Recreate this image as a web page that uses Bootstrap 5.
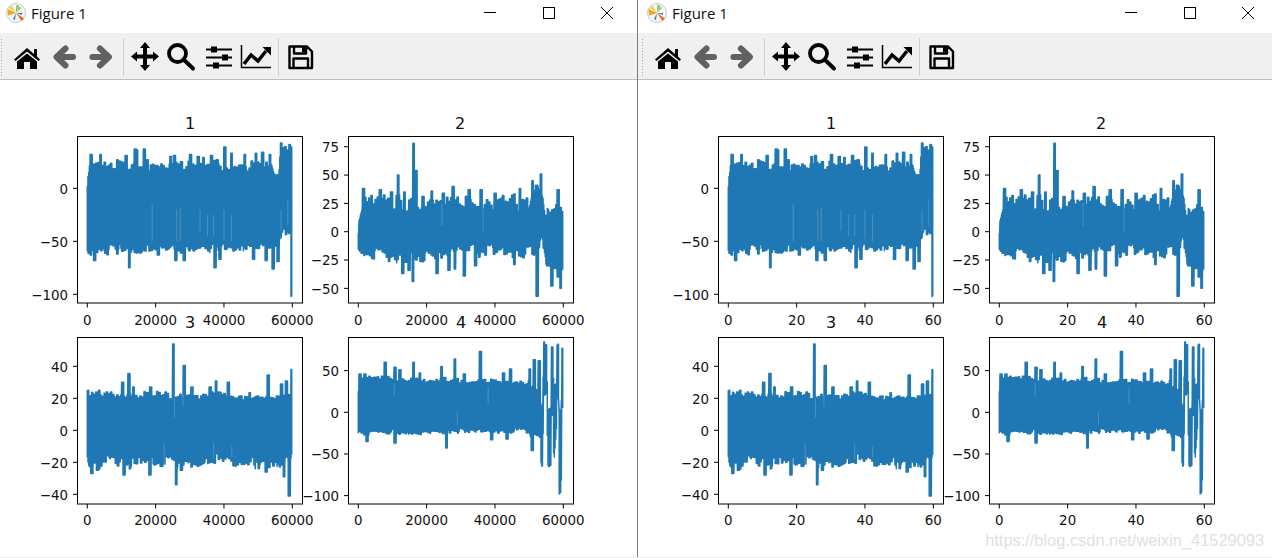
<!DOCTYPE html>
<html lang="en">
<head>
<meta charset="UTF-8">
<title>Figure 1</title>
<link href="https://cdn.jsdelivr.net/npm/bootstrap@5.3.0/dist/css/bootstrap.min.css" rel="stylesheet">
<style>
    html, body { height: 558px; overflow: hidden; background: #fff; }
    .desk { width: 1272px; height: 558px; position: relative; border-bottom: 1px solid #eee; }
    .fig-win { height: 557px; flex: none; }
    .fig-left { width: 638px; border-right: 1px solid #7b7b7b; --pad-l: 0px; --pad-r: 24px; }
    .fig-right { width: 634px; --pad-l: 3px; --pad-r: 18px; }
    .win-bar { height: 33px; background: #fff; padding: 0 var(--pad-r) 7px calc(6px + var(--pad-l)); }
    .win-title { font: 15px "Open Sans", "Noto Sans", sans-serif; color: #111; margin: 0 0 0 5px; }
    .win-ctl { gap: 46.5px; }
    .win-ctl svg { display: block; }
    .tool-strip { height: 47px; background: #f0f0f0; border-bottom: 1px solid #bdbdbd; padding: 2px 0 0 var(--pad-l); }
    .tool-grip { width: 3px; height: 39px; margin: 0 6px 0 0; background-image: radial-gradient(#a9a9a9 0.8px, transparent 1px); background-size: 3px 3px; }
    .tool-btn { width: 36px; height: 32px; display: block; flex: none; }
    .tool-sep { width: 1px; height: 38px; background: #cfcfcf; flex: none; margin: 0 3px 0 6px; }
    .tool-sep-wide { margin-left: 7px; }
    .fig-canvas { display: block; margin-left: var(--pad-l); }
    .fig-canvas text { font-family: "DejaVu Sans", sans-serif; font-size: 13.4px; fill: #111; }
    .fig-canvas text.ax-title { font-size: 16px; }
    .wm-text { position: absolute; right: 8px; bottom: 7px; font: 16.4px "Liberation Sans", sans-serif; color: #e0e0e0; white-space: nowrap; }
</style>
</head>
<body>
<div class="desk d-flex">
    <div class="fig-win fig-left" id="winLeft">
        <div class="win-bar d-flex align-items-center">
            <svg width="20" height="20" viewBox="0 0 20 20">
                <circle cx="10" cy="10" r="9.5" fill="#f6f6f6" stroke="#c8c8c8"/>
                <path d="M10 10 1.500 6 2 12.500Z" fill="#f2a31f"/>
                <path d="M10 10 5.500 2.500 3 5Z" fill="#efd43c"/>
                <path d="M10 10 10.500 2 13 2.500Z" fill="#7ab648"/>
                <path d="M10 10 15 5 13.500 3.500Z" fill="#8fbf5a"/>
                <path d="M10 10 15.500 18 18 15.500Z" fill="#ea6a2c"/>
                <path d="M10 10 7 16 9 17Z" fill="#3a80c0"/>
                <path d="M10 10 16 10 16 12Z" fill="#3a80c0"/>
            </svg>
            <span class="win-title">Figure 1</span>
            <div class="win-ctl d-flex align-items-center ms-auto">
                <svg width="12" height="12" viewBox="0 0 12 12"><path d="M0 5.500H12" stroke="#000"/></svg>
                <svg width="12" height="12" viewBox="0 0 12 12"><rect x=".5" y=".5" width="11" height="11" fill="none" stroke="#000"/></svg>
                <svg width="12" height="12" viewBox="0 0 12 12"><path d="M0 0 12 12M12 0 0 12" stroke="#000"/></svg>
            </div>
        </div>
        <div class="tool-strip d-flex align-items-center">
            <div class="tool-grip"></div>
            <svg class="tool-btn" viewBox="0 0 36 32"><path d="M18 7 25 13V8H28V15.500L31 18.500 29.500 20 18 10.500 6.500 20 5 18.500Z"/><path d="M8 20.500 18 12.500 28 20.500V28H21V21H15V28H8Z"/></svg>
            <svg class="tool-btn" viewBox="0 0 36 32"><path d="M12 16H28M20.500 7.500 11.500 16 20.500 24.500" fill="none" stroke="#616161" stroke-width="6" stroke-linecap="round" stroke-linejoin="round"/></svg>
            <svg class="tool-btn" viewBox="0 0 36 32"><path d="M27.400 16H11.400M18.900 7.500 27.900 16 18.900 24.500" fill="none" stroke="#616161" stroke-width="6" stroke-linecap="round" stroke-linejoin="round"/></svg>
            <div class="tool-sep"></div>
            <svg class="tool-btn" viewBox="0 0 36 32"><path d="M18 1 23 7H20V13.500H26V10.500L32 15.500 26 20.500V17.500H20V24H23L18 30 13 24H16V17.500H10V20.500L4 15.500 10 10.500V13.500H16V7H13Z"/></svg>
            <svg class="tool-btn" viewBox="0 0 36 32"><circle cx="14.500" cy="12.500" r="8.500" fill="none" stroke="#000" stroke-width="3.800"/><path d="M20.500 18.500 30 27.500" stroke="#000" stroke-width="4" stroke-linecap="round"/></svg>
            <svg class="tool-btn" viewBox="0 0 36 32"><path d="M7 8.500H33M7 16.500H33M7 24.500H33" stroke="#000" stroke-width="2"/><path d="M12 5.500h6v6h-6zM23 13.500h6v6h-6zM14 21.500h6v6h-6z"/></svg>
            <svg class="tool-btn" viewBox="0 0 36 32"><path d="M6.500 4V26.500H36" fill="none" stroke="#000" stroke-width="1.500"/><path d="M9 23 16 14 23 20 31 10" fill="none" stroke="#000" stroke-width="3.500"/><path d="M27.500 6H36V14.500Z"/></svg>
            <div class="tool-sep tool-sep-wide"></div>
            <svg class="tool-btn" viewBox="0 0 36 32"><path d="M7.500 5.500H25L30 10.500V27H7.500ZM12 5.500V12.500H24V5.500M11.500 27V17.500H26V27" fill="none" stroke="#000" stroke-width="2.400" stroke-linejoin="round"/><path d="M20 6h3v5.500h-3z"/></svg>
        </div>
        <svg class="fig-canvas" width="634" height="477" viewBox="0 80 634 477"></svg>
    </div>
    <div class="wm-text">https://blog.csdn.net/weixin_41529093</div>
</div>

<script src="https://cdn.jsdelivr.net/npm/bootstrap@5.3.0/dist/js/bootstrap.bundle.min.js"></script>
<script>
    // the four traces: envelope anchors (x in thousands, y in data units) plus single peaks
    const plots = [
        {
            title: '1', box: [77.5, 136.5, 302.5, 303], zero: 87.3, y0: 188.3, sy: 1.06, ticks: [0, -50, -100], titleX: 190, titleY: 129, labY: 325,
            top: [[0, 5], [.2, 14], [.6, 22], [54, 21], [54.8, 11], [56, 11], [56.5, 40], [59.7, 41], [59.9, 40], [60, -12]], topN: 2.500, topS: 4,
            bot: [[0, -58], [54, -55], [56.6, -50], [57, -42], [60, -42]], botN: 3, botS: 2.500,
            topP: [[1.1, 32], [3.9, 32], [8.8, 27], [11.3, 31], [14, 37], [14.5, 36], [16.7, 37], [17.5, 27], [24.4, 30], [25.5, 31], [27.6, 25], [30.2, 32], [32.5, 30], [34, 29], [36.4, 31], [38, 27], [40.3, 39], [42.2, 33], [46.1, 32], [49.4, 33], [51.3, 34], [53.5, 32]],
            botP: [[2.2, -68], [1, -63], [8.8, -62], [12.3, -75], [15.5, -61], [20.8, -63], [25.9, -68], [28.4, -68], [37.4, -75], [38.8, -67], [48.6, -67], [52.3, -68], [54.4, -76], [55.9, -69], [59.95, -102]],
            pale: [[19, -15, -50], [26.2, -20, -50], [27.2, -18, -50], [33, -20, -40], [35.2, -25, -45], [37, -25, -45], [40, -20, -48], [42.2, -25, -50], [58.7, -10, -35], [56.7, -20, -40]]
        },
        {
            title: '2', box: [348.5, 136.5, 573.5, 303], zero: 358.3, y0: 231.7, sy: 1.133, ticks: [75, 50, 25, 0, -25, -50], titleX: 460, titleY: 129, labY: 325,
            top: [[0, 5], [.2, 16], [1, 25], [50, 27], [51, 38], [53.8, 38], [54.5, 20], [56, 16], [60, 20]], topN: 3, topS: 6,
            bot: [[0, -18], [.3, -21], [52, -17], [53, -20], [53.5, -5], [54, -8], [55, -25], [60, -30]], botN: 3, botS: 5,
            topP: [[1.5, 38], [3.9, 32], [6.5, 37], [9.8, 35], [11.7, 50], [13.5, 35], [16.2, 78], [16.9, 54], [19, 31], [21.5, 36], [24.9, 34], [27.8, 40], [32.5, 37], [36, 37], [40, 34], [42.4, 32], [47.3, 38], [51, 45], [52.2, 41], [53.5, 51], [58.5, 37]],
            botP: [[13, -37], [14.8, -34], [16, -44], [23, -37], [26.6, -34], [28.3, -33], [31, -39], [34.3, -30], [45.7, -29], [52.3, -57], [56.6, -48], [58.5, -40], [59.2, -50]],
            pale: [[24.5, 5, 25], [36.5, 0, 20]]
        },
        {
            title: '3', box: [77.5, 337.5, 302.5, 504], zero: 87.3, y0: 430.3, sy: 1.6, ticks: [40, 20, 0, -20, -40], titleX: 190, titleY: 328, labY: 525,
            top: [[0, 18], [.2, 22], [59.2, 21], [59.6, 15], [60, 6]], topN: 1.500, topS: 1.500,
            bot: [[0, -15], [.5, -20], [33, -20], [37, -17], [45, -19], [58, -20], [59.8, -12], [60, -10]], botN: 2.500, botS: 2.500,
            topP: [[.2, 25], [3.5, 25], [10.3, 30], [12.2, 35.500], [13.500, 27], [18.6, 27], [25.2, 54], [28.4, 40.500], [30.7, 27], [35.9, 27], [37.7, 30.800], [41.3, 30], [53, 34.500], [56.9, 29], [58.3, 30.800], [59.8, 38]],
            botP: [[1.3, -27], [3, -25], [10.8, -28], [12.5, -24], [18.3, -28], [26, -34], [27.5, -25], [52.3, -26], [57.6, -29], [59.1, -41]],
            pale: [[25.5, 8, 20], [28, 15, 22], [37, -18, -8], [22.5, -8, -22], [42.3, -10, -17]]
        },
        {
            title: '4', box: [348.5, 337.5, 573.5, 504], zero: 358.3, y0: 412.3, sy: .833, ticks: [50, 0, -50, -100], titleX: 461, titleY: 328, labY: 525,
            top: [[0, 25], [.2, 40], [49.500, 36], [50.5, 30], [53.3, 28], [53.5, 7], [54, 7], [54.2, 82], [55.2, 82], [55.4, 3], [56.4, 3], [56.5, 76], [57, 76], [57.2, 35], [58, 35], [58.1, 82], [58.6, 82], [58.7, 0], [59.4, 0], [59.5, 75], [60, 75]], topN: 2, topS: 2.500,
            bot: [[0, -25], [50, -22], [50.5, -30], [51, -25], [52, -30], [53.3, -30], [53.5, -65], [54, -65], [54.2, 20], [55.2, 20], [55.4, -65], [56.4, -65], [56.5, -5], [57, -5], [57.2, -61], [57.6, -40], [58, -20], [58.1, 15], [58.6, 15], [58.7, -100], [59.4, -100], [59.5, 5], [60, 5]], botN: 2, botS: 2.500,
            topP: [[.5, 46], [2, 46], [4.8, 42], [7.9, 60], [10.7, 54], [12.2, 51], [16.2, 60], [18, 47], [24.4, 55], [28.3, 64], [31, 46], [35.7, 73], [42.5, 47], [44.5, 52], [50.2, 52], [51.5, 63], [53, 62]],
            botP: [[2.6, -35], [10.7, -37], [25.8, -43], [39, -33], [43.5, -32], [50.9, -46]],
            pale: [[10.5, 20, 35], [38, 10, 30], [29, -15, 0]]
        }
    ];

    // simple seeded random so both windows get the same trace
    function seeded(s) {
        return () => { s = (s * 1664525 + 1013904223) >>> 0; return s / 4294967296; };
    }

    function lerp(points, x) {
        for (let i = 1; i < points.length; i++) {
            if (x <= points[i][0]) {
                const a = points[i - 1], b = points[i];
                return a[1] + (b[1] - a[1]) * (x - a[0]) / (b[0] - a[0]);
            }
        }
        return points[points.length - 1][1];
    }

    function tracePath(p, idx) {
        const rnd = seeded(idx * 97 + 11);
        const pxPerK = 205 / 60;
        let d = '', nt = 0, nb = 0, st = 0, sb = 0;
        for (let i = 0; i * .7 <= 205; i++) {
            const k = i * .7 / pxPerK;
            if (i % 3 === 0) nt = (rnd() - .5) * 2 * p.topN;
            if (i % 3 === 1) nb = (rnd() - .5) * 2 * p.botN;
            if (i % 9 === 0) st = (rnd() - .5) * 2 * p.topS;
            if (i % 8 === 0) sb = (rnd() - .5) * 2 * p.botS;
            let up = lerp(p.top, k) + nt + st, lo = lerp(p.bot, k) + nb + sb;
            p.topP.forEach(q => { if (Math.abs(q[0] - k) < .38) up = Math.max(up, q[1]); });
            p.botP.forEach(q => { if (Math.abs(q[0] - k) < .38) lo = Math.min(lo, q[1]); });
            const x = (p.zero + i * .7).toFixed(1);
            d += `${d ? 'L' : 'M'}${x} ${(p.y0 - up * p.sy).toFixed(1)}L${x} ${(p.y0 - lo * p.sy).toFixed(1)}`;
        }
        return d;
    }

    function drawFigure(svg, xLabels) {
        let out = '';
        plots.forEach((p, idx) => {
            const [x0, y0, x1, y1] = p.box;
            out += `<path d="${tracePath(p, idx)}" fill="none" stroke="#1f77b4" stroke-width="1.5" stroke-linejoin="round"/>`;
            p.pale.forEach(s => {
                const x = p.zero + s[0] * 205 / 60;
                out += `<path d="M${x} ${p.y0 - s[1] * p.sy}V${p.y0 - s[2] * p.sy}" stroke="#fff" stroke-opacity=".2"/>`;
            });
            out += `<rect x="${x0}" y="${y0}" width="${x1 - x0}" height="${y1 - y0}" fill="none" stroke="#000"/>`;
            xLabels.forEach((lab, i) => {
                const x = p.zero + i * 205 / 3;
                out += `<path d="M${x} ${y1}v4.500" stroke="#000"/>`;
                out += `<text x="${x}" y="${p.labY}" text-anchor="middle">${lab}</text>`;
            });
            p.ticks.forEach(t => {
                const y = p.y0 - t * p.sy;
                out += `<path d="M${x0} ${y}h-4.500" stroke="#000"/>`;
                out += `<text x="${x0 - 9.500}" y="${y + 5.300}" text-anchor="end">${String(t).replace('-', '\u2212')}</text>`;
            });
            out += `<text class="ax-title" x="${p.titleX}" y="${p.titleY}" text-anchor="middle">${p.title}</text>`;
        });
        svg.innerHTML = out;
    }

    const winLeft = document.getElementById('winLeft');
    const winRight = winLeft.cloneNode(true);
    winRight.id = 'winRight';
    winRight.classList.replace('fig-left', 'fig-right');
    winLeft.after(winRight);

    drawFigure(winLeft.querySelector('.fig-canvas'), [0, 20000, 40000, 60000]);
    drawFigure(winRight.querySelector('.fig-canvas'), [0, 20, 40, 60]);
</script>
</body>
</html>
